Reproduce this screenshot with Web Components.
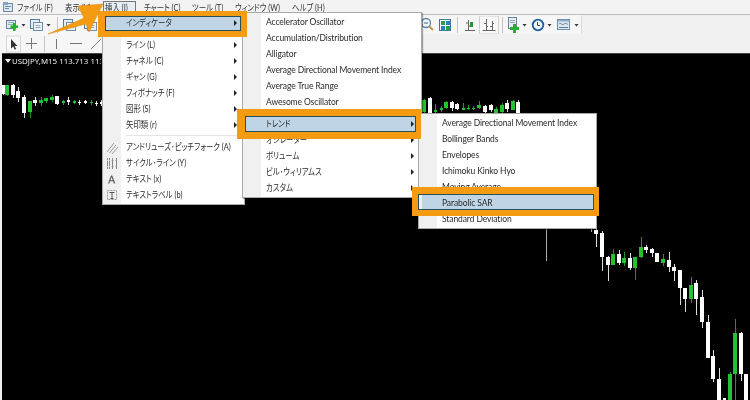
<!DOCTYPE html>
<html lang="ja"><head><meta charset="utf-8"><title>MT4</title>
<style>
html,body{margin:0;padding:0;background:#f0f0f0}
body{width:750px;height:400px;overflow:hidden;font-family:"Lato","Noto Sans CJK JP",sans-serif}
</style></head><body>
<mt-window>
  <mt-menubar>
    <mt-title style="margin-left:17px;width:35px">ファイル (F)</mt-title>
    <mt-title style="margin-left:13px;width:32px">表示 (V)</mt-title>
    <mt-title style="margin-left:6px;width:33px" active>挿入 (I)</mt-title>
    <mt-title style="margin-left:8px;width:37px">チャート (C)</mt-title>
    <mt-title style="margin-left:11px;width:32px">ツール (T)</mt-title>
    <mt-title style="margin-left:11px;width:46px">ウィンドウ (W)</mt-title>
    <mt-title style="margin-left:11px;width:35px">ヘルプ (H)</mt-title>
  </mt-menubar>
  <mt-toolbar width="581" top>
    <mt-icon name="newchart" w="14" style="margin-left:5px"></mt-icon><mt-icon name="drop" w="9"></mt-icon>
    <mt-icon name="profile" w="15" style="margin-left:1px"></mt-icon><mt-icon name="drop" w="9"></mt-icon>
    <mt-icon name="sep" w="7" style="margin-left:1px"></mt-icon>
    <mt-icon name="profile" w="14" style="margin-left:1px"></mt-icon>
    <mt-icon name="profile" w="14" style="margin-left:7px"></mt-icon>
    <mt-icon name="zoom" w="16" style="margin-left:322px"></mt-icon>
    <mt-icon name="grid" w="14" style="margin-left:4px"></mt-icon>
    <mt-icon name="sep" w="7" style="margin-left:1px"></mt-icon>
    <mt-icon name="bars" w="14" style="margin-left:2px"></mt-icon>
    <mt-icon name="bars2" w="20" style="margin-left:2px"></mt-icon>
    <mt-icon name="sep" w="5"></mt-icon>
    <mt-icon name="fileplus" w="14" style="margin-left:2px"></mt-icon><mt-icon name="drop" w="9"></mt-icon>
    <mt-icon name="clock" w="14" style="margin-left:2px"></mt-icon><mt-icon name="drop" w="9"></mt-icon>
    <mt-icon name="tpl" w="15" style="margin-left:3px"></mt-icon><mt-icon name="drop" w="9"></mt-icon>
  </mt-toolbar>
  <mt-toolbar width="300">
    <mt-icon name="cursor" w="15" style="margin-left:6px"></mt-icon>
    <mt-icon name="cross" w="15" style="margin-left:3px"></mt-icon>
    <mt-icon name="sep" w="7" style="margin-left:2px"></mt-icon>
    <mt-icon name="vline" w="14" style="margin-left:1px"></mt-icon>
    <mt-icon name="hline" w="14" style="margin-left:6px"></mt-icon>
    <mt-icon name="dline" w="14" style="margin-left:6px"></mt-icon>
  </mt-toolbar>
  <mt-chart>USDJPY,M15 113.713 113.714</mt-chart>

  <mt-menu style="left:102px;top:13px;width:143px">
    <mt-item arrow hi>インディケータ</mt-item>
    <mt-sep></mt-sep>
    <mt-item arrow>ライン (L)</mt-item>
    <mt-item arrow>チャネル (C)</mt-item>
    <mt-item arrow>ギャン (G)</mt-item>
    <mt-item arrow>フィボナッチ (F)</mt-item>
    <mt-item arrow>図形 (S)</mt-item>
    <mt-item arrow>矢印類 (r)</mt-item>
    <mt-sep></mt-sep>
    <mt-item icon="pitch">アンドリューズ･ピッチフォーク (A)</mt-item>
    <mt-item icon="cycle">サイクル･ライン (Y)</mt-item>
    <mt-item icon="text">テキスト (x)</mt-item>
    <mt-item icon="label">テキストラベル (b)</mt-item>
  </mt-menu>
  <mt-menu style="left:242px;top:12px;width:180px">
    <mt-item>Accelerator Oscillator</mt-item>
    <mt-item>Accumulation/Distribution</mt-item>
    <mt-item>Alligator</mt-item>
    <mt-item>Average Directional Movement Index</mt-item>
    <mt-item>Average True Range</mt-item>
    <mt-item>Awesome Oscillator</mt-item>
    <mt-sep></mt-sep>
    <mt-item arrow hi>トレンド</mt-item>
    <mt-item arrow>オシレーター</mt-item>
    <mt-item arrow>ボリューム</mt-item>
    <mt-item arrow>ビル･ウィリアムス</mt-item>
    <mt-item arrow>カスタム</mt-item>
  </mt-menu>
  <mt-menu style="left:418px;top:113px;width:179px">
    <mt-item>Average Directional Movement Index</mt-item>
    <mt-item>Bollinger Bands</mt-item>
    <mt-item>Envelopes</mt-item>
    <mt-item>Ichimoku Kinko Hyo</mt-item>
    <mt-item>Moving Average</mt-item>
    <mt-item hi>Parabolic SAR</mt-item>
    <mt-item>Standard Deviation</mt-item>
  </mt-menu>

  <mt-callout style="left:98px;top:11px;width:149px;height:26px;border-width:5px 6px 6px 7px"></mt-callout>
  <mt-callout style="left:237px;top:109px;width:184px;height:30px;border-width:7px 5px 7px 8px"></mt-callout>
  <mt-callout style="left:412px;top:187px;width:187px;height:29px;border-width:7px 5px 6px 6px"></mt-callout>
  <mt-arrow></mt-arrow>
</mt-window>

<script>
function shadow(el, html){ el.attachShadow({mode:'open'}).innerHTML = html; return el.shadowRoot; }
const JP=/[\u3040-\u30ff\u4e00-\u9fff]/;

class MtWindow extends HTMLElement{ constructor(){super();shadow(this,`<style>
:host{display:flex;flex-direction:column;position:relative;width:750px;height:400px;overflow:hidden;background:#f0f0f0;filter:blur(.3px)}
</style><slot></slot>`);} }

class MtMenubar extends HTMLElement{ constructor(){super();shadow(this,`<style>
:host{display:flex;align-items:center;height:14px;flex:none;background:#f3f3f3;color:#333;position:relative}
svg{position:absolute;left:3px;top:2px}
</style><svg width="10" height="10" viewBox="0 0 10 10"><rect x=".5" y="1.5" width="9" height="8" fill="#dbe8f2" stroke="#6d8ba6"/><path d="M2 4.500h6M2 6.500h4" stroke="#6d8ba6"/><rect x="0" y="0" width="5" height="3" fill="#7fa6c6"/></svg><slot></slot>`);} }

class MtTitle extends HTMLElement{ constructor(){super();shadow(this,`<style>
:host{display:block;font:8.8px/13px "Lato","Noto Sans CJK JP",sans-serif;font-feature-settings:"palt";white-space:nowrap;height:13px;box-sizing:border-box;flex:none}
:host([active]){box-shadow:inset 0 0 0 1px #777;background:#e6eef5;padding-left:2px}
span{display:inline-block;transform:scaleX(.84);transform-origin:0 50%}
</style><span><slot></slot></span>`);} }

class MtToolbar extends HTMLElement{
  static get observedAttributes(){return ['width']}
  constructor(){super();shadow(this,`<style>
:host{display:block;flex:none;height:19px;background:#f0f0f0}
:host([top]){border-top:1px solid #bdbdbd;height:19px}
.bar{display:flex;align-items:center;height:100%;background:#f6f6f6;box-shadow:1px 1px 0 #dcdcdc}
</style><div class="bar"><slot></slot></div>`);}
  attributeChangedCallback(n,o,v){this.shadowRoot.querySelector('.bar').style.width=v+'px'}
}

const ICONS={
 drop:'<path d="M2.500 8h4L4.500 10.500z" fill="#333"/>',
 sep:'<path d="M3.500 1v16" stroke="#c4c4c4"/>',
 newchart:'<rect x="1.500" y="4.500" width="9" height="8" fill="#dfe9f3" stroke="#6b8197"/><path d="M3 6.500h6M3 8.500h5" stroke="#9bb0c4"/><path d="M8 7h2.500v2.500H13V12h-2.500v3H8v-3H5.500V9.500H8z" fill="#23b02b"/>',
 profile:'<rect x="1.500" y="3.500" width="9" height="9" fill="#e4edf5" stroke="#4f7ea6"/><rect x="4.500" y="6.500" width="9" height="8" fill="#eef3f8" stroke="#6f8fa8"/><path d="M6.500 9.500h5M6.500 11.500h5" stroke="#91a7b9"/>',
 zoom:'<circle cx="7" cy="7" r="4.500" fill="#eef4fa" stroke="#5c86aa" stroke-width="1.300"/><path d="M5 7h4" stroke="#3a6d96"/><path d="M10.500 10.500l3.500 3.500" stroke="#c9923a" stroke-width="2"/>',
 grid:'<rect x=".5" y="3.500" width="11" height="11" fill="#fff" stroke="#3a7a9a"/><rect x="2" y="5" width="4" height="4" fill="#27a14a"/><rect x="7" y="5" width="4" height="4" fill="#2d7fc3"/><rect x="2" y="10" width="4" height="4" fill="#2d7fc3"/><rect x="7" y="10" width="4" height="4" fill="#27a14a"/>',
 bars:'<path d="M5.500 4v10M2 14.500h10" stroke="#666" fill="none"/><path d="M5 7H3M5 10h3" stroke="#666"/><rect x="7" y="6" width="3" height="5" fill="#1f9c2b"/>',
 bars2:'<rect x=".5" y="0" width="19" height="18" fill="#f8f8f8" stroke="#cfcfcf"/><path d="M7.500 3v11M13.500 5v9M3.500 14.500h13" stroke="#666" fill="none"/><path d="M7 7.500H5M7 10.500h2M13 7.500h2M13 10.500h-2" stroke="#666"/>',
 fileplus:'<rect x="2.500" y="1.500" width="8" height="11" fill="#e6edf3" stroke="#6a8296"/><path d="M4 4.500h5M4 6.500h5" stroke="#93a6b5"/><path d="M7 8h3v3h3v3h-3v3H7v-3H4v-3h3z" fill="#23b02b"/>',
 clock:'<circle cx="7" cy="9" r="5.300" fill="#eef5fb" stroke="#1a5f9e" stroke-width="1.800"/><path d="M6.500 6v3.500h2.500" stroke="#444" fill="none"/>',
 tpl:'<rect x=".5" y="3.500" width="12" height="10" fill="#dbe6ef" stroke="#6f8ea8"/><path d="M2 8c2-2 3 2 5 0s3 1 4 0M2 11.500h9" stroke="#5f7f99" fill="none"/><rect x="1" y="4" width="11" height="1.500" fill="#8fb0cb"/>',
 cursor:'<rect x=".5" y="1" width="14" height="16" fill="#fafafa" stroke="#d7d7d7"/><path d="M5 4v9.500l2.200-2 1.600 3.300 1.400-.7-1.600-3.200h2.900z" fill="#333"/>',
 cross:'<path d="M7.500 3v11M2 8.500h11" stroke="#777"/>',
 vline:'<path d="M7.500 4v10" stroke="#777"/>',
 hline:'<path d="M1 8.500h12" stroke="#777"/>',
 dline:'<path d="M2 14L12 4" stroke="#888"/>',
 pitch:'<path d="M4 13L11 4M6.500 14L13 6M9 15L15 8" stroke="#999" fill="none"/>',
 cycle:'<path d="M4.500 3v11M6.500 3v11M9.500 3v11M13.500 3v11" stroke="#888"/><path d="M4 5.500h10M4 11.500h10" stroke="#ccc" stroke-dasharray="1 1"/>',
 text:'<path d="M5 12.500L8 4.500h1.200l3 8h-1.300l-.8-2.200H7l-.8 2.200zM7.400 9.300h2.400L8.600 6z" fill="#555"/>',
 label:'<path d="M4.500 3.500h9v9h-9z" fill="none" stroke="#999" stroke-dasharray="2 1"/><path d="M6.500 5.500h5M9 5.500v6M7.500 11.500h3" stroke="#555" fill="none"/>'
};

class MtIcon extends HTMLElement{
  connectedCallback(){
    if(this.shadowRoot) return;
    const w=+this.getAttribute('w')||14;
    shadow(this,`<style>:host{display:block;flex:none;width:${w}px;height:18px}svg{display:block}</style><svg width="${w}" height="18" viewBox="0 0 ${w} 18">${ICONS[this.getAttribute('name')]||''}</svg>`);
  }
}

const C=[
[2.6,85,95,85,94,'w'],[7.3,85,96,85,95,'g'],[12.6,84,98,85,95,'w'],[18,87,102,91,98,'w'],[24,95,118,97,113,'w'],[29.5,101,118,101,112,'g'],
[35,97,106,100,103,'w'],[40.6,97,106,100,103,'g'],[46,98,103,98,101,'g'],[51.6,95,102,97,100,'g'],[57,96,105,96,104,'w'],[62.6,100,105,101,103,'g'],
[68,97,105,100,102,'w'],[74,100,104,101,103,'g'],[79,100,105,102,103,'w'],[85,100,104,101,103,'w'],[90.6,100,105,102,103,'g'],[96,101,106,103,104,'w'],[100.6,100,106,102,104,'w'],
[424,99,113,100,112,'g'],[430,97,116,98,113,'w'],[435,104,113,110,112,'g'],[441,106,112,108,110,'g'],[446,101,109,102,108,'g'],[452,101,111,102,108,'w'],[457,103,110,104,109,'w'],
[462.7,103,110,108,110,'g'],[467.7,105,110,108,109,'g'],[473,106,110,108,109,'g'],[479,101,109,105,108,'g'],[485,105,114,106,112,'w'],[490.7,104,112,105,110,'w'],[496,107,113,109,113,'g'],[502,103,113,105,112,'g'],[507,100,112,103,109,'w'],[512.7,100,110,101,110,'g'],[518,100,113,102,113,'w'],
[546,229,261,0,0,'x'],[590.7,229,232,0,0,'x'],
[596,229,247,230,234,'w'],[601.7,231,271,233,257,'w'],[607.5,256,281,257,265,'w'],[613,249,265,254,265,'g'],[618.5,250,265,254,263,'w'],[624,252,266,258,263,'g'],
[629.5,253,270,258,268,'w'],[635,257,280,257,268,'g'],[640.5,237,258,247,257,'g'],[646,245,253,247,250,'w'],[652,248,257,249,253,'w'],[657,253,262,253,262,'w'],[663,254,266,259,263,'g'],
[668.5,252,272,260,267,'w'],[674,264,281,267,271,'w'],[679.5,270,305,270,288,'w'],[685,288,312,288,299,'w'],[690.5,277,303,285,299,'g'],[696,280,315,283,299,'w'],[701.5,290,328,297,322,'w'],
[707.5,315,358,322,358,'w'],[713,350,382,356,379,'w'],[718.5,368,400,379,400,'w'],[724,398,400,398,400,'w'],[729.5,372,400,374,400,'g'],[735,319,400,333,374,'g'],[740.5,332,381,333,374,'w'],[746,374,400,374,400,'w']
];
class MtChart extends HTMLElement{ constructor(){super();
  const col={w:'#fff',g:'#22c32e',x:'#aaa'}, wk={w:'#ddd',g:'#1a9a24',x:'#aaa'};
  let s='';
  for(const [x,a,b,t,u,c] of C){
    const X=Math.round(x);
    s+=`<rect x="${X}" y="${a-53}" width="1" height="${b-a}" fill="${wk[c]}"/>`;
    if(u>t){const w=u-t<3?3:4;s+=`<rect x="${X-(w>3?2:1)}" y="${t-53}" width="${w}" height="${u-t}" fill="${col[c]}"/>`;}
  }
  shadow(this,`<style>
:host{display:block;flex:1;position:relative;background:#000;margin-left:2px;border-top:1px solid #444;color:#fff;overflow:hidden}
.wrap{position:absolute;left:-2px;top:-1px}
svg{display:block}
.lab{position:absolute;left:10px;top:1px;width:89px;overflow:hidden;font:7.9px/12px "Noto Sans",sans-serif;white-space:nowrap;color:#eee}
.tri{position:absolute;left:3px;top:5px;border:3px solid transparent;border-top:4px solid #eee;border-bottom:0}
</style><div class="wrap"><svg width="750" height="347">${s}</svg></div><span class="tri"></span><div class="lab"><slot></slot></div>`);
} }

class MtMenu extends HTMLElement{ constructor(){super();shadow(this,`<style>
:host{display:block;position:absolute;box-sizing:border-box;padding:1px 0;background:linear-gradient(90deg,#f0f0f0 18px,#fff 18px);border:1px solid #a9a9a9;box-shadow:1px 1px 1px rgba(0,0,0,.35);color:#2a2a2a}
</style><slot></slot>`);} }

class MtSep extends HTMLElement{ constructor(){super();shadow(this,`<style>
:host{display:block;height:6px;position:relative}
:host::after{content:"";position:absolute;left:23px;right:3px;top:2px;height:1px;background:#e4e4e4}
</style>`);} }

class MtItem extends HTMLElement{
  connectedCallback(){
    if(this.shadowRoot) return;
    const ic=this.getAttribute('icon');
    const jp=JP.test(this.textContent);
    shadow(this,`<style>
:host{display:flex;align-items:center;height:16px;position:relative;padding-left:23px;font:8.5px/16px "Lato","Noto Sans CJK JP",sans-serif;font-feature-settings:"palt";white-space:nowrap;min-width:0}
:host([hi]){background:#bfd5e6;margin:0 3px;padding-left:20px}
.t{display:block;letter-spacing:-.1px}
.t.jp{font-size:9px;letter-spacing:0;transform:scaleX(.82);transform-origin:0 50%}
.a{position:absolute;right:7px;top:5px;border-left:3px solid #222;border-top:3px solid transparent;border-bottom:3px solid transparent}
:host([hi]) .a{right:4px}
svg{position:absolute;left:0;top:0}
</style>${ic?`<svg width="16" height="16" viewBox="0 0 16 16">${ICONS[ic]}</svg>`:''}<span class="t${jp?' jp':''}"><slot></slot></span>${this.hasAttribute('arrow')?'<span class="a"></span>':''}`);
  }
}

class MtCallout extends HTMLElement{ constructor(){super();shadow(this,`<style>
:host{display:block;position:absolute;box-sizing:border-box;border:6px solid #f59b12;box-shadow:inset 0 0 0 1px #23505c;z-index:5}
</style>`);} }

class MtArrow extends HTMLElement{ constructor(){super();shadow(this,`<style>
:host{display:block;position:absolute;left:0;top:0;z-index:6}
svg{display:block}
</style><svg width="120" height="40"><polygon points="48,34 84,18 78,6 103,4 89,32 86,24" fill="#f59b12" stroke="#d98a10" stroke-width=".5"/></svg>`);} }

for(const [n,c] of Object.entries({'mt-window':MtWindow,'mt-menubar':MtMenubar,'mt-title':MtTitle,'mt-toolbar':MtToolbar,'mt-icon':MtIcon,'mt-chart':MtChart,'mt-menu':MtMenu,'mt-sep':MtSep,'mt-item':MtItem,'mt-callout':MtCallout,'mt-arrow':MtArrow})) customElements.define(n,c);
</script>
</body></html>
